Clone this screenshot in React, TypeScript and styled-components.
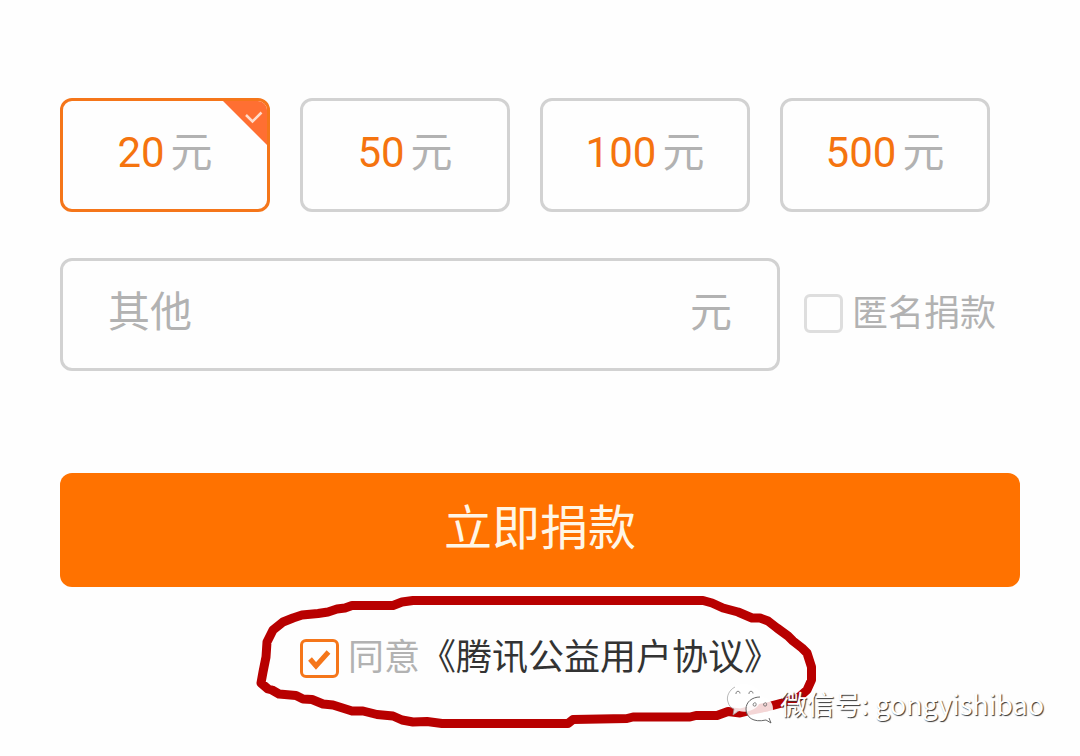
import React, { useState } from 'react';
import styled, { createGlobalStyle } from 'styled-components';

const GlobalStyle = createGlobalStyle`
  *, *::before, *::after { box-sizing: border-box; }
  body {
    margin: 0;
    background: #fefefe;
    font-family: Roboto, "Noto Sans CJK SC", sans-serif;
    color: #b2b2b2;
  }
  button, input { font: inherit; }
`;

const Page = styled.main`
  padding: 98px 60px 0;
  overflow: hidden;
`;

const AmountGrid = styled.fieldset`
  display: grid;
  grid-template-columns: repeat(4, 1fr);
  gap: 30px;
  margin: 0 30px 46px 0;
  padding: 0;
  border: 0;
`;

const AmountCard = styled.label<{ $active: boolean }>`
  position: relative;
  display: flex;
  align-items: center;
  justify-content: center;
  gap: 6px;
  height: 114px;
  padding-bottom: 4px;
  border: 3px solid ${p => (p.$active ? '#f5761a' : '#d2d2d2')};
  border-radius: 12px;
  overflow: hidden;
  font-size: 42px;
  line-height: 48px;
  cursor: pointer;
`;

const HiddenRadio = styled.input`
  position: absolute;
  opacity: 0;
  margin: 0;
`;

const Figure = styled.span`
  color: #f5740f;
`;

const Corner = styled.svg`
  position: absolute;
  top: 0;
  right: 0;
  width: 44px;
  height: 44px;
`;

const CustomRow = styled.div`
  display: flex;
  align-items: center;
  gap: 24px;
`;

const CustomField = styled.label`
  display: flex;
  flex: 1;
  align-items: center;
  height: 113px;
  padding: 0 45px 4px;
  border: 3px solid #d2d2d2;
  border-radius: 12px;
  font-size: 42px;
  line-height: 48px;
`;

const CustomInput = styled.input`
  flex: 1;
  min-width: 0;
  height: 60px;
  padding: 0;
  border: 0;
  outline: 0;
  background: transparent;
  color: #b2b2b2;
  &::placeholder { color: #b2b2b2; opacity: 1; }
`;

const CheckLabel = styled.label`
  display: flex;
  align-items: center;
  gap: 9px;
  font-size: 36px;
  line-height: 42px;
  white-space: nowrap;
`;

const AnonymousLabel = styled(CheckLabel)`
  width: 216px;
  padding-bottom: 2px;
`;

const BoxWrap = styled.span`
  position: relative;
  display: flex;
`;

const Box = styled.input`
  appearance: none;
  width: 39px;
  height: 39px;
  margin: 0;
  border: 3px solid #dedede;
  border-radius: 6px;
  &:checked { border-color: #f5761a; }
`;

const Tick = styled.svg`
  position: absolute;
  inset: 0;
  width: 39px;
  height: 39px;
  pointer-events: none;
`;

const DonateButton = styled.button`
  display: block;
  width: 100%;
  height: 114px;
  margin-top: 102px;
  padding: 0 0 2px;
  border: 0;
  border-radius: 12px;
  background: #ff7200;
  color: #fff6e6;
  font-size: 48px;
  line-height: 60px;
`;

const Agreement = styled.section`
  position: relative;
  display: flex;
  justify-content: center;
  align-items: flex-start;
  height: 169px;
  padding-top: 50px;
`;

const TermsLink = styled.a`
  color: #333;
  font-size: 36px;
  line-height: 42px;
  text-decoration: none;
  white-space: nowrap;
`;

const Loop = styled.svg`
  position: absolute;
  top: 3px;
  left: calc(50% - 290px);
  width: 580px;
  height: 150px;
  pointer-events: none;
`;

const Watermark = styled.div`
  position: absolute;
  right: -24px;
  bottom: 31px;
  display: flex;
  align-items: center;
  gap: 4px;
  color: #fff;
  font-family: "Noto Sans CJK SC", sans-serif;
  font-size: 27px;
  line-height: 42px;
  white-space: nowrap;
  text-shadow: 1px 1px 1px #333;
`;

const Bubbles = styled.svg`
  width: 50px;
  height: 42px;
`;

function Checkbox({ checked, onChange }: { checked: boolean; onChange: (v: boolean) => void }) {
  return (
    <BoxWrap>
      <Box type="checkbox" checked={checked} onChange={e => onChange(e.target.checked)} />
      {checked && (
        <Tick viewBox="0 0 39 39" fill="none" aria-hidden="true">
          <path d="M10 20L16 27L28.500 13" stroke="#f5761a" strokeWidth="5" />
        </Tick>
      )}
    </BoxWrap>
  );
}

const amounts = [20, 50, 100, 500];

export default function App() {
  const [amount, setAmount] = useState(20);
  const [anonymous, setAnonymous] = useState(false);
  const [agreed, setAgreed] = useState(true);

  return (
    <>
      <GlobalStyle />
      <Page>
        <AmountGrid>
          {amounts.map(value => (
            <AmountCard key={value} $active={value === amount}>
              <HiddenRadio
                type="radio"
                name="amount"
                checked={value === amount}
                onChange={() => setAmount(value)}
              />
              <Figure>{value}</Figure>
              <span>元</span>
              {value === amount && (
                <Corner viewBox="0 0 44 44" fill="none" aria-hidden="true">
                  <path d="M0 0H44V44Z" fill="#ff6f32" />
                  <path d="M23 14L29.500 20.500L38.500 11.500" stroke="#ffdccb" strokeWidth="2.500" />
                </Corner>
              )}
            </AmountCard>
          ))}
        </AmountGrid>

        <CustomRow>
          <CustomField>
            <CustomInput type="text" inputMode="decimal" placeholder="其他" />
            <span>元</span>
          </CustomField>
          <AnonymousLabel>
            <Checkbox checked={anonymous} onChange={setAnonymous} />
            <span>匿名捐款</span>
          </AnonymousLabel>
        </CustomRow>

        <DonateButton type="button">立即捐款</DonateButton>

        <Agreement>
          <CheckLabel>
            <Checkbox checked={agreed} onChange={setAgreed} />
            <span>同意</span>
          </CheckLabel>
          <TermsLink href="#terms">《腾讯公益用户协议》</TermsLink>

          <Loop viewBox="250 590 580 150" fill="none" aria-hidden="true">
            <path
              d="M413 600.500L402 602L393 605.500H352L345 608L337 609L328 612L318 613.500L302 615L293 618L283 622L273 630L267 642L266 657L263 672L261 683L268 689L272 690L279 694L296 695.500L303 699L312 699.500L323 704L333 705L352 711L363 711L377 714.500L393 716L402 720L413 722L427 721.500L442 723.500H568L573 719.500L627 718.500L633 717H690L696 715.500L717 715.500L728 711.500L740 713L752 710L767 707L782 703L798 698L807 690L811.500 680V667L807 653L802 648L793 641L788 636L777 628L768 621L760 618H752L738 612L723 608L712 603L703 600.500Z"
              stroke="#b80000"
              strokeWidth="9"
              strokeLinejoin="round"
            />
          </Loop>

          <Watermark>
            <Bubbles viewBox="726 683 50 42" fill="none" aria-hidden="true">
              <path
                d="M744 684C734 684 727 690 727 698C727 703 730 707 734 709L733 715L739 711C750 714 761 707 761 698C761 690 754 684 744 684Z"
                fill="#fff"
                fillOpacity=".86"
              />
              <path d="M735 687C729 690 726 697 728 702C729 706 731 708 734 709L733 715L738 711" stroke="#999" strokeWidth=".7" />
              <path
                d="M760 697C752 697 746 702 746 709C746 717 753 723 766 720L771 723L769 718C772 716 773 713 773 709C773 702 768 697 760 697Z"
                fill="#fff"
                fillOpacity=".84"
              />
              <path d="M760 697C752 697 746 702 746 709C746 717 753 723 766 720L771 723L769 718" stroke="#555" strokeWidth=".9" />
              <path
                d="M736 694v-1.500q2-3 4 0v1M749 694v-1.500q2-3 4 0v1M753 705c0-3 4-3 3 0c0 2-3 1-3 0M763.500 705c0-3 4-3 3 0c0 2-3 1-3 0"
                stroke="#666"
                strokeWidth=".8"
              />
            </Bubbles>
            <span>微信号: gongyishibao</span>
          </Watermark>
        </Agreement>
      </Page>
    </>
  );
}
